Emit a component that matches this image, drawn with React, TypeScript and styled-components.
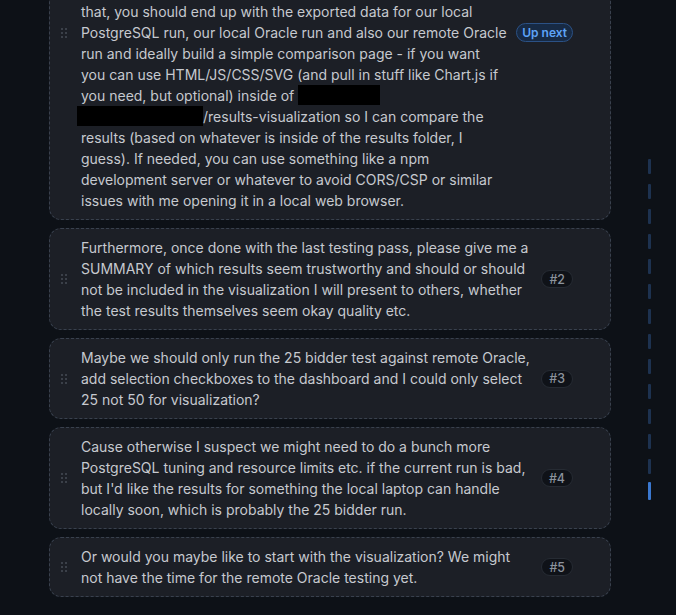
import React, { useLayoutEffect, useRef } from 'react';
import styled, { createGlobalStyle } from 'styled-components';

const GlobalStyle = createGlobalStyle`
    html, body {
        margin: 0;
        padding: 0;
        background: #0d1117;
    }
    body {
        font-family: Inter, "Noto Sans", sans-serif;
        -webkit-font-smoothing: antialiased;
    }
`;

const Page = styled.div`
    display: flex;
    height: 615px;
    overflow: hidden;
    background: #0d1117;
`;

const Queue = styled.div`
    flex: 0 0 562px;
    margin-left: 49px;
    height: 100%;
    overflow: hidden;
`;

const QueueList = styled.div`
    display: flex;
    flex-direction: column;
    gap: 8px;
    padding: 12px 0 18px;
`;

const Card = styled.div`
    display: flex;
    align-items: center;
    gap: 8px;
    padding: 8px 37px 8px 11px;
    background: #1c1f26;
    border: 1px dashed #39414e;
    border-radius: 12px;
`;

const Handle = styled.div`
    display: grid;
    grid-template-columns: repeat(2, 2px);
    grid-auto-rows: 2px;
    gap: 2px;
    flex: 0 0 6px;
    margin-right: 6px;

    span {
        background: #464c56;
        border-radius: 1px;
    }
`;

const Message = styled.div`
    flex: 1;
    min-width: 0;
    font-size: 14px;
    line-height: 21px;
    color: #c6c9cf;
`;

const Path = styled.span`
    white-space: nowrap;
`;

const Redacted = styled.span<{ $w: number; $shift?: number }>`
    display: inline-block;
    vertical-align: top;
    width: ${p => p.$w}px;
    height: 20px;
    margin-left: ${p => p.$shift ?? 0}px;
    background: #000;
`;

const Badge = styled.span<{ $next?: boolean }>`
    flex: 0 0 auto;
    display: inline-flex;
    align-items: center;
    height: ${p => (p.$next ? 17 : 16)}px;
    padding: 0 ${p => (p.$next ? 5 : 7)}px;
    border-radius: 10px;
    font-size: ${p => (p.$next ? 12 : 12.4)}px;
    font-weight: ${p => (p.$next ? 600 : 500)};
    color: ${p => (p.$next ? '#5ea3f7' : '#8c939d')};
    background: ${p => (p.$next ? '#172a44' : '#0f1218')};
    border: 1px solid ${p => (p.$next ? '#2b5185' : '#262b33')};
`;

const Rail = styled.div`
    display: flex;
    flex-direction: column;
    gap: 10px;
    margin-left: 37px;
    padding-top: 159px;
`;

const Tick = styled.div<{ $active?: boolean }>`
    width: 3px;
    height: ${p => (p.$active ? 18 : 15)}px;
    margin-top: ${p => (p.$active ? -2 : 0)}px;
    border-radius: 1px;
    background: ${p => (p.$active ? '#3a78d0' : '#1d3250')};
`;

const DragHandle = () => (
    <Handle>
        {Array.from({ length: 6 }).map((_, i) => (
            <span key={i} />
        ))}
    </Handle>
);

export default function App() {
    const scrollRef = useRef<HTMLDivElement>(null);
    const firstRef = useRef<HTMLDivElement>(null);

    // keep the queue scrolled so the end of the first queued message sits near the top
    useLayoutEffect(() => {
        const box = scrollRef.current;
        const first = firstRef.current;
        if (!box || !first) return;
        const top = box.getBoundingClientRect().top;
        const bottom = first.getBoundingClientRect().bottom;
        box.scrollTop += bottom - top - 219;
    }, []);

    const queued = [
        {
            id: 2,
            text: 'Furthermore, once done with the last testing pass, please give me a SUMMARY of which results seem trustworthy and should or should not be included in the visualization I will present to others, whether the test results themselves seem okay quality etc.',
        },
        {
            id: 3,
            text: 'Maybe we should only run the 25 bidder test against remote Oracle, add selection checkboxes to the dashboard and I could only select 25 not 50 for visualization?',
        },
        {
            id: 4,
            text: "Cause otherwise I suspect we might need to do a bunch more PostgreSQL tuning and resource limits etc. if the current run is bad, but I'd like the results for something the local laptop can handle locally soon, which is probably the 25 bidder run.",
        },
        {
            id: 5,
            text: 'Or would you maybe like to start with the visualization? We might not have the time for the remote Oracle testing yet.',
        },
    ];

    return (
        <>
            <GlobalStyle />
            <Page>
                <Queue ref={scrollRef}>
                    <QueueList>
                        <Card ref={firstRef}>
                            <DragHandle />
                            <Message>
                                Okay, while the 50 bidder run is still going, let's prepare the next step. Once it
                                finishes, please export the metrics from the local PostgreSQL instance and from both
                                Oracle instances into the results folder, with one subfolder per run and a short
                                README listing the parameters that were used (bidders, duration, pool size and so
                                on). Also copy over the raw logs in case we need to dig into anything later. After
                                <br />
                                that, you should end up with the exported data for our local PostgreSQL run, our
                                local Oracle run and also our remote Oracle run and ideally build a simple
                                comparison page - if you want you{'\u00a0'}can use HTML/JS/CSS/SVG (and pull in stuff
                                like Chart.js if you need, but optional) inside of <Redacted $w={82} />{' '}
                                <Path>
                                    <Redacted $w={126} $shift={-4} />/results-visualization
                                </Path>{' '}
                                so I can compare the results (based on whatever is inside of the results folder, I
                                guess). If needed, you can use something like a npm development server or whatever
                                to avoid CORS/CSP or similar issues with me opening it in a local web browser.
                            </Message>
                            <Badge $next>Up next</Badge>
                        </Card>
                        {queued.map(item => (
                            <Card key={item.id}>
                                <DragHandle />
                                <Message>{item.text}</Message>
                                <Badge>#{item.id}</Badge>
                            </Card>
                        ))}
                    </QueueList>
                </Queue>
                <Rail>
                    {Array.from({ length: 13 }).map((_, i) => (
                        <Tick key={i} />
                    ))}
                    <Tick $active />
                </Rail>
            </Page>
        </>
    );
}
